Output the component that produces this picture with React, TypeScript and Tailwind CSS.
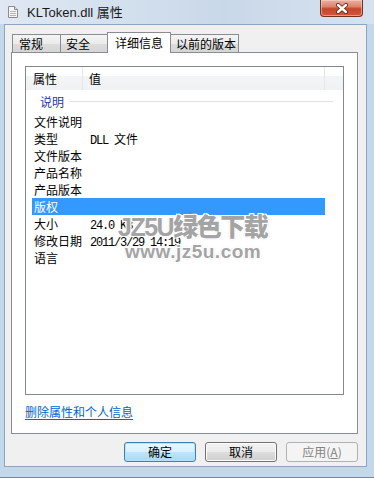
import React from "react";

const rows = [
  { name: "文件说明", mono: "", cjk: "" },
  { name: "类型", mono: "DLL ", cjk: "文件" },
  { name: "文件版本", mono: "", cjk: "" },
  { name: "产品名称", mono: "", cjk: "" },
  { name: "产品版本", mono: "", cjk: "" },
  { name: "版权", mono: "", cjk: "", selected: true },
  { name: "大小", mono: "24.0 KB", cjk: "" },
  { name: "修改日期", mono: "2011/3/29 14:19", cjk: "" },
  { name: "语言", mono: "", cjk: "" },
];

function DocIcon() {
  return (
    <svg width="10" height="12" viewBox="0 0 10 12">
      <path d="M0.5 0.5 H6.5 L9.5 3.5 V11.5 H0.5 Z" fill="#f5f5f5" stroke="#8b8b8b" />
      <path d="M6.5 0.5 V3.5 H9.5" fill="#dcdcdc" stroke="#8b8b8b" />
      <path d="M2 5.5 H8 M2 7.5 H8 M2 9.5 H8" stroke="#b5b5b5" />
    </svg>
  );
}

function CloseButton() {
  return (
    <div className="mr-[11px] w-[43px] h-[17px] flex items-center justify-center rounded-b-[4px] border border-t-0 border-[#6e3224] bg-[linear-gradient(180deg,#eab0a2_0%,#dd8670_40%,#c8432a_55%,#d0583c_100%)] shadow-[inset_0_0_0_1px_rgba(255,220,210,0.5)]">
      <svg width="14" height="11" viewBox="0 0 14 11">
        <path d="M3 2 L11 9 M11 2 L3 9" stroke="#5a1e12" strokeWidth="4" strokeLinecap="round" />
        <path d="M3 2 L11 9 M11 2 L3 9" stroke="#ffffff" strokeWidth="2.4" strokeLinecap="round" />
      </svg>
    </div>
  );
}

export default function App() {
  return (
    <div className="relative w-[374px] h-[478px] overflow-hidden flex flex-col bg-[#c4d8ec] font-['Noto_Sans_CJK_SC',sans-serif] text-[12px] text-black">
      {/* Title bar */}
      <div className="h-[24px] flex items-start bg-[linear-gradient(90deg,#dfe8f3_0%,#d2dfed_35%,#c9d8e9_60%,#d6e2ef_100%)]">
        <div className="h-[24px] flex items-center pl-[8px] gap-[9px]">
          <DocIcon />
          <span className="font-['Liberation_Sans','Noto_Sans_CJK_SC',sans-serif] text-[13px] text-[#1a1a1a] leading-none">
            KLToken.dll 属性
          </span>
        </div>
        <div className="ml-auto">
          <CloseButton />
        </div>
      </div>

      {/* Client area */}
      <div className="ml-[4px] mr-[7px] h-[443px] border border-[#8fa5be] bg-[#f0f0f0] flex flex-col pt-[7px] pl-[6px] pr-[8px]">
        {/* Tabs */}
        <div className="relative z-10 h-[20px] flex items-end">
          <div className="ml-[1px] w-[49px] h-[18px] border border-b-0 border-[#898c95] bg-[linear-gradient(180deg,#f4f4f4_0%,#ebebeb_50%,#dddddd_51%,#d5d5d5_100%)] pl-[6px] leading-[17px]">
            常规
          </div>
          <div className="w-[47px] h-[18px] border border-b-0 border-l-0 border-[#898c95] bg-[linear-gradient(180deg,#f4f4f4_0%,#ebebeb_50%,#dddddd_51%,#d5d5d5_100%)] pl-[5px] leading-[17px]">
            安全
          </div>
          <div className="-ml-[1px] -mb-[1px] w-[64px] h-[21px] border border-b-0 border-[#898c95] bg-white pl-[7px] leading-[19px]">
            详细信息
          </div>
          <div className="w-[68px] h-[18px] border border-b-0 border-l-0 border-[#898c95] bg-[linear-gradient(180deg,#f4f4f4_0%,#ebebeb_50%,#dddddd_51%,#d5d5d5_100%)] pl-[5px] leading-[17px]">
            以前的版本
          </div>
        </div>

        {/* Tab panel */}
        <div className="w-[347px] h-[382px] border border-[#898c95] bg-white flex flex-col pl-[13px] pt-[13px]">
          <div className="w-[319px] h-[329px] border border-[#828790] bg-white flex flex-col">
            {/* Header */}
            <div className="h-[23px] flex bg-[linear-gradient(180deg,#ffffff_0%,#ffffff_40%,#f3f4f6_41%,#f0f1f3_100%)]">
              <div className="w-[57px] pl-[7px] pt-[3px] border-r border-[#e3e6ea]">属性</div>
              <div className="w-[242px] pl-[6px] pt-[3px] border-r border-[#e3e6ea]">值</div>
              <div className="flex-1" />
            </div>

            {/* Group */}
            <div className="h-[23px] flex items-center">
              <span className="pl-[14px] text-[#1e3c91] leading-none">说明</span>
              <div className="ml-[6px] w-[263px] h-px bg-[#e2e2e2]" />
            </div>

            {/* Rows */}
            <div className="flex flex-col ml-[6px]">
              {rows.map((r) => (
                <div
                  key={r.name}
                  className={`w-[293px] h-[17px] flex leading-[17px] ${
                    r.selected ? "bg-[#3399ff] text-white" : ""
                  }`}
                >
                  <div className="w-[57px] pl-[2px]">{r.name}</div>
                  <div className="pl-[1px] whitespace-pre">
                    {r.mono && (
                      <span className="font-['Liberation_Mono',monospace] tracking-[-1.2px]">{r.mono}</span>
                    )}
                    {r.cjk && <span>{r.cjk}</span>}
                  </div>
                </div>
              ))}
            </div>
          </div>

          <div className="mt-[9px] leading-[16px]">
            <span className="text-[#0066cc] underline underline-offset-2">删除属性和个人信息</span>
          </div>
        </div>

        {/* Buttons */}
        <div className="mt-[8px] flex justify-end gap-[9px]">
          <div className="w-[72px] h-[20px] rounded-[3px] border border-[#3c7fb1] bg-[linear-gradient(180deg,#eaf6fd_0%,#d9f0fc_50%,#bee6fd_51%,#a7d9f5_100%)] shadow-[inset_0_0_0_1px_#b8e2f8] flex items-center justify-center leading-none">
            确定
          </div>
          <div className="w-[72px] h-[20px] rounded-[3px] border border-[#707070] bg-[linear-gradient(180deg,#f2f2f2_0%,#ebebeb_50%,#dddddd_51%,#cfcfcf_100%)] shadow-[inset_0_0_0_1px_#fcfcfc] flex items-center justify-center leading-none">
            取消
          </div>
          <div className="w-[72px] h-[20px] rounded-[3px] border border-[#adb2b5] bg-[#f4f4f4] text-[#838383] flex items-center justify-center leading-none">
            应用(<span className="underline">A</span>)
          </div>
        </div>
      </div>

      {/* Bottom frame */}
      <div className="flex-1 border-b border-[#6f89a6]" />

      {/* Watermark */}
      <div className="absolute left-[118px] top-[212px] pointer-events-none font-['Liberation_Sans','Noto_Sans_CJK_SC',sans-serif] font-black text-[#a4a4a4] [text-shadow:1px_1px_0_#fff,-1px_-1px_0_#fff,1px_-1px_0_#fff,-1px_1px_0_#fff,0_0_2px_#888]">
        <div className="text-[25px] leading-[30px] tracking-[-1.5px]">JZ5U绿色下载</div>
        <div className="ml-[7px] text-[19px] leading-[20px] tracking-[0.5px]">www.jz5u.com</div>
      </div>
    </div>
  );
}
